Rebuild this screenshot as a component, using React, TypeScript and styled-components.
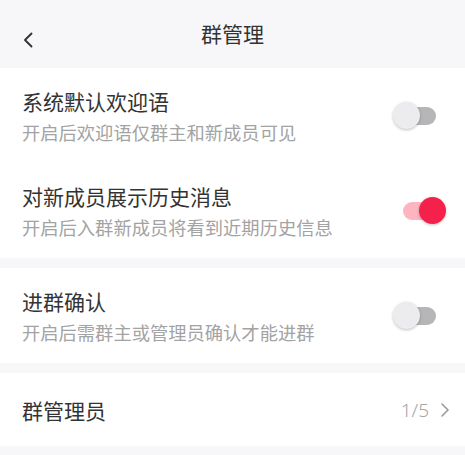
import { useState } from "react";
import styled, { createGlobalStyle } from "styled-components";

const GlobalStyle = createGlobalStyle`
  html, body {
    margin: 0;
    padding: 0;
    background: #f7f7f9;
    font-family: "Noto Sans CJK SC", "Noto Sans", sans-serif;
  }
`;

const Page = styled.div`
  width: 465px;
  min-height: 455px;
  background: #f7f7f9;
  display: flex;
  flex-direction: column;
  gap: 10px;
`;

const Header = styled.div`
  height: 68px;
  display: flex;
  align-items: center;
  justify-content: center;
  position: relative;
  background: #f7f7f9;
`;

const BackButton = styled.button`
  position: absolute;
  left: 19px;
  top: 30px;
  width: 18px;
  height: 20px;
  padding: 0;
  border: none;
  background: none;
  display: flex;
  align-items: center;
  justify-content: center;
`;

const Title = styled.div`
  font-size: 21px;
  line-height: 28px;
  color: #333;
  margin-top: -2px;
`;

const Card = styled.div`
  background: #fff;
  display: flex;
  flex-direction: column;
`;

const Row = styled.div<{ $height: number }>`
  height: ${({ $height }) => $height}px;
  display: flex;
  align-items: center;
  justify-content: space-between;
  padding: 0 19px 0 22px;
`;

const TextBlock = styled.div`
  display: flex;
  flex-direction: column;
  gap: 4px;
`;

const RowTitle = styled.div`
  font-size: 21px;
  line-height: 28px;
  color: #333;
`;

const RowSub = styled.div`
  font-size: 18.3px;
  line-height: 26px;
  color: #a3a3a3;
`;

const SwitchBox = styled.button<{ $on: boolean }>`
  position: relative;
  width: 53px;
  height: 27px;
  padding: 0;
  border: none;
  background: none;
  display: flex;
  align-items: center;
  justify-content: ${({ $on }) => ($on ? "flex-end" : "flex-start")};

  &::before {
    content: "";
    position: absolute;
    left: 10px;
    right: 10px;
    top: 4.5px;
    height: 18px;
    border-radius: 9px;
    background: ${({ $on }) => ($on ? "#fdb5c1" : "#b6b6b8")};
  }
`;

const Knob = styled.span<{ $on: boolean }>`
  position: relative;
  width: 27px;
  height: 27px;
  border-radius: 50%;
  background: ${({ $on }) => ($on ? "#f4224a" : "#ececee")};
  box-shadow: 0 1px 3px rgba(0, 0, 0, 0.25);
`;

const Extra = styled.div`
  display: flex;
  align-items: center;
  gap: 11px;
  margin-right: -4px;
`;

const Count = styled.span`
  font-family: "Noto Sans", sans-serif;
  font-size: 19px;
  font-weight: 300;
  color: #a6a6a6;
`;

function Switch({ initial }: { initial: boolean }) {
  const [on, setOn] = useState(initial);
  return (
    <SwitchBox $on={on} onClick={() => setOn(!on)}>
      <Knob $on={on} />
    </SwitchBox>
  );
}

const settings = [
  [
    { title: "系统默认欢迎语", sub: "开启后欢迎语仅群主和新成员可见", on: false },
    { title: "对新成员展示历史消息", sub: "开启后入群新成员将看到近期历史信息", on: true },
  ],
  [{ title: "进群确认", sub: "开启后需群主或管理员确认才能进群", on: false }],
];

export default function App() {
  return (
    <>
      <GlobalStyle />
      <Page>
        <Header>
          <BackButton>
            <svg width="12" height="16" viewBox="0 0 12 16">
              <polyline points="9.5,1.5 3,8 9.5,14.5" fill="none" stroke="#333" strokeWidth="1.9" strokeLinecap="round" strokeLinejoin="round" />
            </svg>
          </BackButton>
          <Title>群管理</Title>
        </Header>
        {settings.map((group, i) => (
          <Card key={i} style={i === 0 ? { marginTop: -10 } : undefined}>
            {group.map(item => (
              <Row $height={95} key={item.title}>
                <TextBlock>
                  <RowTitle>{item.title}</RowTitle>
                  <RowSub>{item.sub}</RowSub>
                </TextBlock>
                <Switch initial={item.on} />
              </Row>
            ))}
          </Card>
        ))}
        <Card>
          <Row $height={73}>
            <RowTitle>群管理员</RowTitle>
            <Extra>
              <Count>1/5</Count>
              <svg width="10" height="14" viewBox="0 0 10 14">
                <polyline points="2,1 8,7 2,13" fill="none" stroke="#9a9a9a" strokeWidth="1.6" strokeLinecap="round" strokeLinejoin="round" />
              </svg>
            </Extra>
          </Row>
        </Card>
      </Page>
    </>
  );
}
